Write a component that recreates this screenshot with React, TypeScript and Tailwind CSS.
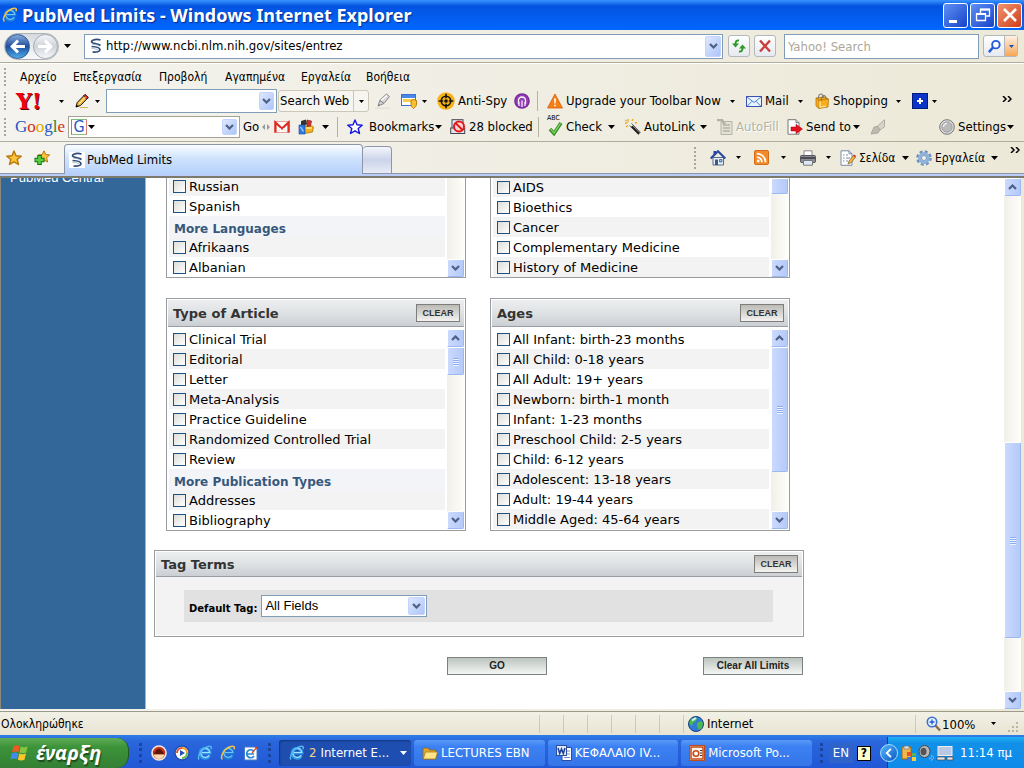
import { type ReactNode } from 'react';

type IconProps = { children: ReactNode; className?: string };

function Icon({ children, className = 'size-4' }: IconProps) {
  return (
    <svg viewBox="0 0 16 16" className={`shrink-0 ${className}`} aria-hidden="true">
      {children}
    </svg>
  );
}

function Caret({ className = '' }: { className?: string }) {
  return (
    <svg viewBox="0 0 7 4" className={`h-1 w-[7px] shrink-0 ${className}`} aria-hidden="true">
      <path d="M0 0h7L3.500 4z" fill="currentColor" />
    </svg>
  );
}

function SmallCaret({ className = '' }: { className?: string }) {
  return (
    <svg viewBox="0 0 5 3" className={`h-[3px] w-[5px] shrink-0 ${className}`} aria-hidden="true">
      <path d="M0 0h5L2.500 3z" fill="currentColor" />
    </svg>
  );
}

function Arrow({ up = false }: { up?: boolean }) {
  return (
    <svg viewBox="0 0 9 6" className={`h-1.5 w-[9px] ${up ? 'rotate-180' : ''}`} aria-hidden="true">
      <path d="M1 1l3.500 3.500L8 1" fill="none" stroke="#4d6185" strokeWidth="2.200" />
    </svg>
  );
}

function Grip({ className = '' }: { className?: string }) {
  return <span className={`w-0 shrink-0 border-l-2 border-dotted border-[#a9a797] ${className}`} />;
}

function Divider({ className = '' }: { className?: string }) {
  return <span className={`h-5 w-px shrink-0 bg-[#b5b29f] ${className}`} />;
}

function DropButton({ className = 'w-[15px]' }: { className?: string }) {
  return (
    <button
      aria-label="Open list"
      className={`flex shrink-0 items-center justify-center self-stretch rounded-[2px] border border-[#c3d3fd] bg-gradient-to-br from-[#dfe8ff] to-[#adc5f8] ${className}`}
    >
      <Arrow />
    </button>
  );
}

function Chevrons({ className = '' }: { className?: string }) {
  return (
    <svg viewBox="0 0 10 6" className={`h-1.5 w-2.5 shrink-0 ${className}`} aria-hidden="true">
      <path d="M1 0l3 3-3 3M6 0l3 3-3 3" fill="none" stroke="#000" strokeWidth="1.500" />
    </svg>
  );
}

/* ---------- icons ---------- */

function IeIcon({ className }: { className?: string }) {
  return (
    <Icon className={className}>
      <path d="M12.500 10.500A5 5 0 1 1 13 8H5" fill="none" stroke="#1d7fd6" strokeWidth="3" />
      <path d="M12.200 10.200A4.500 4.500 0 1 1 12.800 7.500H5" fill="none" stroke="#6fc6f8" strokeWidth="1.200" />
      <path d="M2.500 14.500C-.5 12 4 4 10 1.800c4-1.500 5 .2 4 2.400" fill="none" stroke="#f5c344" strokeWidth="1.500" />
    </Icon>
  );
}

function BlueIeIcon({ className }: { className?: string }) {
  return (
    <Icon className={className}>
      <path d="M12.500 10.500A5 5 0 1 1 13 8H5" fill="none" stroke="#2f9ae8" strokeWidth="3" />
      <path d="M12.200 10.200A4.500 4.500 0 1 1 12.800 7.500H5" fill="none" stroke="#a5e0ff" strokeWidth="1.200" />
      <path d="M2 14.500C0 12 4 4 10 1.800c4-1.500 5 .2 4 2.400" fill="none" stroke="#58b7f2" strokeWidth="1.400" />
    </Icon>
  );
}

function NcbiIcon() {
  return (
    <Icon>
      <rect width="16" height="16" fill="#fff" />
      <path d="M12.500 2C9 .8 4 1.500 3.500 3.800c0 2 6.500 1.500 9 3.700M3.500 8.500c3 .2 8.500 1 8.500 3.200 0 2-4 2.800-7.500 2.300" fill="none" stroke="#2f4d76" strokeWidth="1.700" />
      <path d="M4 6c2.500.8 5 .2 7 2M3.500 10.500c3 0 5 .5 7 1.500" fill="none" stroke="#9cb0c8" strokeWidth=".8" />
    </Icon>
  );
}

function PencilIcon() {
  return (
    <Icon>
      <path d="M2 14l1.200-4.500L11 1.500l3.200 3L6.500 12.500z" fill="#f5b83d" stroke="#111" />
      <path d="M9.500 3l3.200 3 1.600-1.500-3.300-3z" fill="#e33" stroke="#111" strokeWidth=".7" />
      <path d="M5 11l6.500-7" stroke="#fff3b0" />
      <path d="M2 14l.7-2.300 1.700 1.600z" fill="#000" />
      <path d="M6 14.500h8" stroke="#d6b25a" />
    </Icon>
  );
}

function MarkerIcon() {
  return (
    <Icon>
      <path d="M3 13l2-6 6.500-6 3 2.500-5.500 7z" fill="#d6d6d6" stroke="#8b8b8b" />
      <path d="M6 7.500l6-5" stroke="#fff" strokeWidth="1.500" />
      <path d="M5 7.500l3.800 2.800M3 13l2-1.500" stroke="#777" />
      <path d="M0 15.200h15" stroke="#dcdcd4" />
    </Icon>
  );
}

function PopupIcon() {
  return (
    <Icon>
      <rect x=".5" y="1.500" width="14" height="11" fill="#fff" stroke="#3b6fd0" />
      <path d="M1 2h13v3H1z" fill="#4b86ea" />
      <path d="M2 7.500h12" stroke="#f5cf4b" strokeWidth="3" />
      <path d="M10 7.500l2.500-1 3 1v3.500c0 2-1.500 3.500-3 4.500-1.500-1-2.500-2.500-2.500-4.500z" fill="#fbc02d" stroke="#c07c14" />
    </Icon>
  );
}

function TargetIcon() {
  return (
    <Icon className="size-[18px]">
      <circle cx="8" cy="8" r="7.800" fill="#f6b113" />
      <circle cx="8" cy="8" r="4.200" fill="none" stroke="#111" strokeWidth="1.400" />
      <circle cx="8" cy="8" r="1.600" fill="#111" />
      <path d="M8 1.500v4M8 10.500v4M1.500 8h4M10.500 8h4" stroke="#111" strokeWidth="1.400" />
    </Icon>
  );
}

function PodcastIcon() {
  return (
    <Icon>
      <circle cx="8" cy="8" r="7.800" fill="#7a2a9a" />
      <circle cx="8" cy="8" r="6.300" fill="#9440b4" />
      <path d="M4.500 11V7.500a3.500 3.500 0 0 1 7 0V11" fill="none" stroke="#fff" strokeWidth="1.300" />
      <path d="M5 9v4M11 9v4M8 7.500V14" stroke="#efdcf6" strokeWidth="1.400" />
    </Icon>
  );
}

function WarnIcon() {
  return (
    <Icon>
      <path d="M8 1l7.500 14H.5z" fill="#f57f17" stroke="#d85f0b" strokeWidth=".8" />
      <path d="M7 5.500h2l-.4 5H7.400zM7.200 11.700h1.600v1.600H7.200z" fill="#fff" />
    </Icon>
  );
}

function MailIcon() {
  return (
    <Icon>
      <rect x=".5" y="3.500" width="15" height="10" fill="#e8f3ff" stroke="#3c50b8" />
      <path d="M1 4l7 5.500L15 4M1 13.300l5-5M15 13.300l-5-5" fill="none" stroke="#4f7fd0" />
    </Icon>
  );
}

function BagIcon() {
  return (
    <Icon>
      <path d="M2 5l9-1 3.500 2-.5 8-9 1.500L2 13z" fill="#f7ae1e" stroke="#b87208" strokeWidth=".8" />
      <path d="M2 5l3 2 9.500-1M5 7v8.300" fill="none" stroke="#b87208" strokeWidth=".8" />
      <path d="M6 8.500v5.500l6-.8" fill="none" stroke="#ffdf8a" strokeWidth="1.500" />
      <path d="M4.500 5.500C4.500-.5 9-.5 9.500 5M7.500 8c0-7 4.500-7 4.500-2" fill="none" stroke="#777" strokeWidth="1.100" />
    </Icon>
  );
}

function PlusIcon() {
  return (
    <Icon>
      <rect x=".5" y=".5" width="15" height="15" fill="#0c34c8" stroke="#001c7c" />
      <path d="M8 5v6M5 8h6" stroke="#fff" strokeWidth="2" />
    </Icon>
  );
}

function GmailIcon() {
  return (
    <Icon>
      <rect x=".5" y="2.500" width="15" height="11" fill="#fff" stroke="#e8a09a" />
      <path d="M1.500 13.500V3.500L8 9.500l6.500-6v10" fill="none" stroke="#de2c22" strokeWidth="2.200" />
      <path d="M3.500 13L7 9M12.500 13L9 9" stroke="#ddd" />
    </Icon>
  );
}

function GadgetsIcon() {
  return (
    <Icon>
      <path d="M5 7h9l1.500 1-1 5-8 1.500L5 13z" fill="#f4b21f" stroke="#9a6a06" strokeWidth=".7" />
      <path d="M3 2l5-1.500 1 4.500-3 2-3-1z" fill="#333" />
      <path d="M9 1l4.500 1-1 5-3.500.5z" fill="#d0342c" stroke="#7a1510" strokeWidth=".6" />
      <path d="M1 6h6v9H1z" fill="#2f7be0" stroke="#184a9c" strokeWidth=".6" />
      <path d="M2.500 8l3 4.500" stroke="#a8d0ff" strokeWidth="1.300" />
      <path d="M8 9h6" stroke="#ffe691" strokeWidth="1.500" />
    </Icon>
  );
}

function StarIcon({ fill = '#fff', stroke = '#1414e0' }: { fill?: string; stroke?: string }) {
  return (
    <Icon>
      <path d="M8 1l2 4.800 5.200.4-4 3.300 1.300 5L8 11.800l-4.500 2.700 1.300-5-4-3.300L6 5.800z" fill={fill} stroke={stroke} strokeWidth="1.400" strokeLinejoin="round" />
    </Icon>
  );
}

function BlockedIcon() {
  return (
    <Icon>
      <rect x="2" y=".7" width="11" height="9" fill="#e6f0fa" stroke="#445" />
      <rect x=".7" y="9" width="14" height="5.500" fill="#e5e5e5" stroke="#445" />
      <circle cx="9" cy="7.500" r="5" fill="#ffd5d5" stroke="#e01b1b" strokeWidth="2" />
      <path d="M5.500 4l7 7" stroke="#e01b1b" strokeWidth="2" />
    </Icon>
  );
}

function SpellIcon() {
  return (
    <span className="relative flex h-[18px] w-4 shrink-0">
      <span className="absolute -top-1 left-0 text-[7px] leading-[9px]">ABC</span>
      <svg viewBox="0 0 16 18" className="h-[18px] w-4" aria-hidden="true">
        <path d="M3 11l4 4.500L14 5" fill="none" stroke="#2f8a21" strokeWidth="3.400" />
        <path d="M3.500 11L7 15l6.500-9.500" fill="none" stroke="#7fd060" strokeWidth="1.400" />
      </svg>
    </span>
  );
}

function WandIcon() {
  return (
    <Icon>
      <path d="M5.500 5.500l9 9" stroke="#222" strokeWidth="3.200" />
      <path d="M6 5l9 8.500" stroke="#aaa" strokeWidth="1" />
      <path d="M4.500 4.500l2.500 2.500" stroke="#eee" strokeWidth="2.400" />
      <path d="M3 0v3M0 4h2.500M8 0L7 2M1 8l2-1.500M0 1l1.500 1M10 4l2-.5" stroke="#e9a91b" strokeWidth="1.300" />
    </Icon>
  );
}

function FormIcon() {
  return (
    <Icon>
      <path d="M4 2.500h11v13H4z" fill="#e3e1d6" stroke="#b4b2a4" />
      <path d="M6 6h7M6 9h7M6 12h7" stroke="#b4b2a4" strokeWidth="1.400" />
      <path d="M0 1h5l3 5" fill="none" stroke="#b4b2a4" strokeWidth="2.500" />
    </Icon>
  );
}

function SendIcon() {
  return (
    <Icon>
      <path d="M1 .7h8l3 3v11.500H1z" fill="#fff" stroke="#777" />
      <path d="M9 .7v3h3" fill="#ddd" stroke="#777" />
      <path d="M4 8h5V5.300l6.500 4.700L9 14.700V12H4z" fill="#e3131f" stroke="#97000a" strokeWidth=".5" />
    </Icon>
  );
}

function BrushIcon() {
  return (
    <Icon>
      <path d="M1 15l3-7 5-1 1.500 3L8 14z" fill="#bdbbb0" stroke="#a3a196" strokeWidth=".8" />
      <path d="M7.500 7L14.500.8v7L10 11z" fill="#d7d5ca" stroke="#a3a196" strokeWidth=".8" />
    </Icon>
  );
}

function KnobIcon() {
  return (
    <Icon>
      <circle cx="8" cy="8" r="7.300" fill="#ddd" stroke="#777" />
      <circle cx="8" cy="8" r="5.200" fill="#b9b9b9" stroke="#999" strokeWidth=".8" />
      <path d="M4.500 8A3.500 3.500 0 0 1 8 4.500" fill="none" stroke="#eee" strokeWidth="1.400" />
    </Icon>
  );
}

function AddStarIcon() {
  return (
    <Icon>
      <path d="M10 .8l1.700 3.700 3.900.4-3 2.800 1 4.300L10 10l-3.500 2 .8-4.300-3-2.800 4-.4z" fill="#fcc33b" stroke="#b87708" />
      <path d="M5.500 5v10M.5 10h10" stroke="#137413" strokeWidth="4.600" />
      <path d="M5.500 6v8M1.500 10h8" stroke="#59cf47" strokeWidth="2.600" />
    </Icon>
  );
}

function HomeIcon() {
  return (
    <Icon>
      <path d="M3 7.500h10.500V15H3z" fill="#e8f0fb" stroke="#5a6b88" />
      <path d="M3.500 1h2.500v4H3.500z" fill="#2347b0" />
      <path d="M.7 8.500L8 1.200l7.300 7.300" fill="none" stroke="#26469e" strokeWidth="2" />
      <path d="M5 9.500h3V15H5z" fill="#385890" />
      <path d="M9.500 9.500h2.500v2.500H9.500z" fill="#8cc0ea" stroke="#335" strokeWidth=".6" />
    </Icon>
  );
}

function RssIcon() {
  return (
    <Icon className="size-[15px]">
      <rect x=".5" y=".5" width="15" height="15" rx="1.500" fill="#f28a2b" stroke="#d2640e" />
      <circle cx="4.500" cy="11.700" r="1.500" fill="#fff" />
      <path d="M3 7.500a5.500 5.500 0 0 1 5.500 5.500M3 3.800A9.200 9.200 0 0 1 12.300 13" fill="none" stroke="#fff" strokeWidth="1.800" />
    </Icon>
  );
}

function PrinterIcon() {
  return (
    <Icon>
      <path d="M4 .8h8V6H4z" fill="#fff" stroke="#888" />
      <rect x=".5" y="5.500" width="15" height="7" rx="1" fill="#8a8c92" stroke="#55575c" />
      <path d="M1 8h14" stroke="#4b4d52" strokeWidth="2" />
      <path d="M3.500 10.500h9v4.700h-9z" fill="#dce9fa" stroke="#777" />
    </Icon>
  );
}

function PageIcon() {
  return (
    <Icon>
      <path d="M1 .8h8l3 3v11.500H1z" fill="#fff" stroke="#7a8aa8" />
      <path d="M9 .8v3h3M3 5h1.500M3 8h1.500M3 11h1.500M6 5h2M6 8h4M6 11h2" fill="none" stroke="#7a8aa8" />
      <path d="M8 14l1-3 5-6 2 1.700-5 6z" fill="#f1b23e" stroke="#7d5b1f" strokeWidth=".7" />
      <path d="M13 5.500l1-1 2 1.500-1 1.200z" fill="#d33" />
    </Icon>
  );
}

function GearIcon() {
  return (
    <Icon>
      <circle cx="8" cy="8" r="6.500" fill="none" stroke="#6d8fb5" strokeWidth="2.500" strokeDasharray="2.900 2.200" />
      <circle cx="8" cy="8" r="4.300" fill="#fff" stroke="#8fb2dc" strokeWidth="3.200" />
      <circle cx="8" cy="8" r="2.500" fill="#f3f1e7" stroke="#6d8fb5" strokeWidth=".9" />
    </Icon>
  );
}

function GlobeIcon() {
  return (
    <Icon>
      <circle cx="8" cy="8" r="7.500" fill="#2f7ad6" stroke="#17427e" />
      <path d="M2 4.500C4 1.500 7 1 9 2l-1 3-3 2-1 3-2.500-2zM9 7l4-2 2 2-1 5-3 2-2-4z" fill="#4fb84a" />
      <path d="M4 4.500l4-2.500" stroke="#d9f3ff" strokeWidth="2" />
    </Icon>
  );
}

function WindowsFlag() {
  return (
    <svg viewBox="0 0 20 18" className="h-[18px] w-5 shrink-0" aria-hidden="true">
      <path d="M3.500 2C6 .8 8 1 9.700 2L8.400 8.200C6.500 7.200 4.500 7.200 2 8.200z" fill="#ee5a24" />
      <path d="M10.700 2.500c2 1 4.300 1 7-.2l-1.500 6.200c-2.500 1-4.500 1-6.800 0z" fill="#86c440" />
      <path d="M1.800 9.300c2.300-1 4.500-1 6.400 0l-1.300 6C5 14.300 3 14.300.4 15.300z" fill="#3f8cf0" />
      <path d="M9.200 9.600c2.200 1 4.400 1 6.800 0l-1.500 6.200c-2.300 1-4.500 1-6.600 0z" fill="#fbc62b" />
    </svg>
  );
}

/* ---------- browser chrome ---------- */

function TitleBar() {
  const button = 'flex size-[25px] items-center justify-center rounded-[3px] border border-white';
  return (
    <header className="flex h-[30px] shrink-0 items-center bg-gradient-to-b from-[#3a93ff] via-[#0453e0] via-20% to-[#0167ff] pr-0.5 pl-0.5">
      <IeIcon className="size-4" />
      <h1 className="ml-1 flex-1 font-['Noto_Sans','Open_Sans',sans-serif] text-[18px] leading-6 font-bold text-white [text-shadow:1px_1px_1px_#0a2a90]">
        PubMed Limits - Windows Internet Explorer
      </h1>
      <div className="flex gap-0.5">
        <button aria-label="Minimize" className={`${button} bg-gradient-to-br from-[#5f8ff5] to-[#1941c8]`}>
          <span className="mt-3 mr-1.5 h-[3px] w-2 bg-white" />
        </button>
        <button aria-label="Restore" className={`${button} bg-gradient-to-br from-[#5f8ff5] to-[#1941c8]`}>
          <Icon>
            <path d="M5.500 6V2.500h9V9H11M5.500 2.500h9M1.500 7h9v6.500h-9z" fill="none" stroke="#fff" strokeWidth="1.300" />
            <path d="M5 2.500h10M1 7h10" stroke="#fff" strokeWidth="2" />
          </Icon>
        </button>
        <button aria-label="Close" className={`${button} bg-gradient-to-br from-[#f0936f] to-[#cf3a12]`}>
          <Icon>
            <path d="M2 2l12 12M14 2L2 14" stroke="#fff" strokeWidth="2.600" />
          </Icon>
        </button>
      </div>
    </header>
  );
}

function AddressBar() {
  const small = 'flex size-[22px] shrink-0 items-center justify-center rounded-[3px] border border-[#b3b8bd] bg-gradient-to-b from-white to-[#e6e9f0]';
  return (
    <div className="flex h-[33px] shrink-0 items-center border-b border-[#b0ad9b] pr-1.5 pl-1 text-[13px]">
      <div className="flex h-[27px] w-[55px] shrink-0 items-center justify-between rounded-full border border-[#aeb2b8] bg-gradient-to-b from-[#d6dadf] to-[#f7f8f9]">
        <button aria-label="Back" className="flex size-[25px] items-center justify-center rounded-full border border-[#2f5a94] bg-gradient-to-b from-[#88a9da] via-[#1f4f9f] to-[#4faee8]">
          <Icon className="size-[17px]">
            <path d="M15 8H4M8.500 2.500L3 8l5.500 5.500" fill="none" stroke="#fff" strokeWidth="2.800" />
          </Icon>
        </button>
        <button aria-label="Forward" className="flex size-[25px] items-center justify-center rounded-full border border-[#a5acb5] bg-gradient-to-b from-[#f3f4f6] via-[#cfd4da] to-[#f5f8fa]">
          <Icon className="size-[17px]">
            <path d="M1 8h11M7.500 2.500L13 8l-5.500 5.500" fill="none" stroke="#fff" strokeWidth="2.800" />
          </Icon>
        </button>
      </div>
      <button aria-label="Recent pages" className="ml-[5px]">
        <Caret />
      </button>
      <div className="ml-[13px] flex h-[25px] flex-1 items-center border border-[#7f9db9] bg-white p-px pl-[3px]">
        <NcbiIcon />
        <input aria-label="Address" defaultValue="http://www.ncbi.nlm.nih.gov/sites/entrez" className="ml-0.5 min-w-0 flex-1 outline-none" />
        <DropButton className="w-4" />
      </div>
      <button aria-label="Refresh" className={`${small} ml-[5px]`}>
        <Icon>
          <path d="M8 2.500C5.500 2 4.500 3.500 4.500 6M8 13.500c2.500.5 3.500-1 3.500-3.500" fill="none" stroke="#2f9a27" strokeWidth="2" />
          <path d="M1 5.500h7L4.500 9.500zM8 10.500h7L11.500 6.500z" fill="#2f9a27" />
        </Icon>
      </button>
      <button aria-label="Stop" className={`${small} ml-1`}>
        <Icon>
          <path d="M3 2.500l10 11M13 2.500l-10 11" stroke="#c8403c" strokeWidth="2.400" />
        </Icon>
      </button>
      <input aria-label="Search" placeholder="Yahoo! Search" className="ml-2 h-[25px] w-[195px] border border-[#7f9db9] bg-white px-[3px] outline-none placeholder:text-[#aca899]" />
      <div className="ml-1 flex h-[22px] w-[35px] shrink-0 rounded-[3px] border border-[#b3b8bd] bg-gradient-to-b from-white to-[#e6e9f0]">
        <button aria-label="Go" className="flex flex-1 items-center justify-center border-r border-[#b3b8bd]">
          <Icon className="size-[15px]">
            <circle cx="9.500" cy="6" r="4" fill="#fff" stroke="#2459d8" strokeWidth="2" />
            <path d="M6.500 9L2 14" stroke="#2459d8" strokeWidth="2.600" />
          </Icon>
        </button>
        <button aria-label="Search options" className="flex w-3 items-center justify-center bg-gradient-to-b from-[#fdf0e2] to-[#f6a650] text-[#1a4fc0]">
          <SmallCaret />
        </button>
      </div>
    </div>
  );
}

const MENU = [
  { label: 'Αρχείο', width: 'w-[53px]' },
  { label: 'Επεξεργασία', width: 'w-[86px]' },
  { label: 'Προβολή', width: 'w-[66px]' },
  { label: 'Αγαπημένα', width: 'w-[76px]' },
  { label: 'Εργαλεία', width: 'w-[65px]' },
  { label: 'Βοήθεια', width: 'w-[60px]' },
];

function MenuBar() {
  return (
    <nav className="flex h-[26px] shrink-0 items-center border-t border-white pt-px pl-1">
      <Grip className="h-[18px]" />
      <div className="ml-3.5 flex">
        {MENU.map((item) => (
          <button key={item.label} className={`text-left whitespace-nowrap ${item.width}`}>
            {item.label}
          </button>
        ))}
      </div>
    </nav>
  );
}

type ToolProps = { icon?: ReactNode; label?: string; caret?: boolean; className: string };

function Tool({ icon, label, caret, className }: ToolProps) {
  return (
    <button aria-label={label ?? 'Tool'} className={`flex shrink-0 items-center gap-[3px] whitespace-nowrap ${className}`}>
      {icon}
      {label && <span>{label}</span>}
      {caret && <SmallCaret className="ml-auto" />}
    </button>
  );
}

function YahooBar() {
  return (
    <div className="flex h-6 shrink-0 items-center pr-3 pl-1 text-[13px]">
      <Grip className="h-[18px]" />
      <button className="ml-2.5 w-[33px] text-left font-['DejaVu_Serif',serif] text-[22px] leading-6 font-bold text-[#f00010] [text-shadow:1px_1px_0_#500]">
        Y!
      </button>
      <SmallCaret className="ml-2.5" />
      <Tool icon={<PencilIcon />} caret className="ml-2.5 w-[26px]" />
      <div className="ml-1.5 flex h-6 w-[171px] shrink-0 items-center border border-[#7f9db9] bg-white p-0.5">
        <input aria-label="Yahoo search" className="min-w-0 flex-1 outline-none" />
        <DropButton />
      </div>
      <div className="ml-px flex h-[22px] w-[91px] shrink-0 items-center rounded-[3px] border border-[#cbc8b8] bg-[#f6f5ef]">
        <button className="flex-1 pl-px text-left whitespace-nowrap">Search Web</button>
        <button aria-label="Search Web options" className="flex h-full w-[15px] items-center justify-center border-l border-[#cbc8b8]">
          <SmallCaret />
        </button>
      </div>
      <Tool icon={<MarkerIcon />} className="ml-1.5 w-[26px]" />
      <Tool icon={<PopupIcon />} caret className="w-[26px]" />
      <Tool icon={<TargetIcon />} label="Anti-Spy" className="ml-2.5 w-[77px]" />
      <Tool icon={<PodcastIcon />} className="w-4" />
      <Divider className="ml-[7px]" />
      <Tool icon={<WarnIcon />} label="Upgrade your Toolbar Now" caret className="ml-[9px] w-[188px]" />
      <Tool icon={<MailIcon />} label="Mail" caret className="ml-[11px] w-[57px]" />
      <Tool icon={<BagIcon />} label="Shopping" caret className="ml-[11px] w-[87px]" />
      <Tool icon={<PlusIcon />} caret className="ml-[11px] w-[25px]" />
      <Chevrons className="mb-1 ml-auto" />
    </div>
  );
}

function GoogleBar() {
  return (
    <div className="flex h-[29px] shrink-0 items-center border-b border-[#b0ad9b] pr-2.5 pb-px pl-1 text-[13px]">
      <Grip className="h-[18px]" />
      <a href="#google" className="ml-[9px] flex w-[53px] font-['Liberation_Serif',serif] text-[17px] leading-5">
        <span className="text-[#2a56c6]">G</span>
        <span className="text-[#d62d20]">o</span>
        <span className="text-[#e0a800]">o</span>
        <span className="text-[#2a56c6]">g</span>
        <span className="text-[#1d8a3a]">l</span>
        <span className="text-[#d62d20]">e</span>
      </a>
      <div className="flex h-[22px] w-[172px] shrink-0 items-center border border-[#a5a392] bg-white p-0.5">
        <span className="flex size-4 items-center justify-center border border-t-[#7ac07a] border-r-[#e07a7a] border-b-[#8cc07a] border-l-[#6a8ae0] text-[16px] leading-4 text-[#2a56c6]">G</span>
        <Caret className="ml-px" />
        <input aria-label="Google search" className="min-w-0 flex-1 outline-none" />
        <DropButton />
      </div>
      <button className="ml-[3px] w-[19px] text-left">Go</button>
      <svg viewBox="0 0 8 6" className="h-1.5 w-2 shrink-0" aria-hidden="true">
        <path d="M3 0v6L0 3zM5 0v6l3-3z" fill="#999" />
      </svg>
      <Tool icon={<GmailIcon />} className="ml-1 w-6" />
      <button aria-label="Gadgets" className="flex w-[31px] items-center justify-between">
        <GadgetsIcon />
        <Caret />
      </button>
      <Divider className="ml-2" />
      <button className="ml-[9px] flex w-[103px] items-center">
        <StarIcon />
        <span className="mr-auto ml-1.5">Bookmarks</span>
        <Caret className="mr-2" />
      </button>
      <Tool icon={<BlockedIcon />} label="28 blocked" className="w-[88px]" />
      <Divider />
      <button className="ml-2 flex w-[78px] items-center">
        <SpellIcon />
        <span className="mr-auto ml-[3px]">Check</span>
        <Caret className="mr-2.5" />
      </button>
      <button className="flex w-[92px] items-center">
        <WandIcon />
        <span className="mr-auto ml-[3px]">AutoLink</span>
        <Caret className="mr-2.5" />
      </button>
      <button disabled className="flex w-[70px] items-center gap-[3px] text-[#b4b2a4] [text-shadow:1px_1px_0_#fff]">
        <FormIcon />
        AutoFill
      </button>
      <button className="flex w-[83px] items-center">
        <SendIcon />
        <span className="mr-auto ml-[3px] whitespace-nowrap">Send to</span>
        <Caret className="mr-2.5" />
      </button>
      <Tool icon={<BrushIcon />} className="w-5" />
      <button className="ml-auto flex items-center gap-[3px]">
        <KnobIcon />
        Settings
        <Caret className="-ml-0.5" />
      </button>
    </div>
  );
}

function TabBar() {
  return (
    <div className="flex h-9 shrink-0 flex-col border-b-2 border-b-[#7c7a6c]">
      <div className="flex h-8 items-end">
        <div className="flex w-16 shrink-0 items-center self-stretch border-b border-[#8e95a8] pl-1.5">
          <button aria-label="Favorites">
            <StarIcon fill="#fcc33b" stroke="#b87708" />
          </button>
          <button aria-label="Add to favorites" className="ml-3">
            <AddStarIcon />
          </button>
        </div>
        <button className="flex h-[30px] w-[299px] items-center gap-0.5 rounded-t-[4px] border border-b-0 border-[#8e95a8] bg-gradient-to-b from-[#fbfdff] via-[#cfe3fc] via-45% to-[#b5d0fb] pl-1 text-[13px]">
          <NcbiIcon />
          PubMed Limits
        </button>
        <button aria-label="New tab" className="h-7 w-[29px] rounded-t-[4px] border border-l-0 border-[#8e95a8] bg-gradient-to-b from-[#f4f6fb] via-[#ccd4ea] via-50% to-[#e8ebf7]" />
        <div className="flex flex-1 items-center justify-end self-stretch border-b border-[#8e95a8] pr-1">
          <Grip className="h-[22px]" />
          <Tool icon={<HomeIcon />} caret className="ml-3.5 w-[31px]" />
          <Tool icon={<RssIcon />} caret className="ml-[13px] w-8" />
          <Tool icon={<PrinterIcon />} caret className="ml-3.5 w-[31px]" />
          <button className="ml-[9px] flex w-[69px] items-center gap-[3px]">
            <PageIcon />
            Σελίδα
            <Caret className="ml-auto" />
          </button>
          <button className="ml-[7px] flex w-[82px] items-center gap-[3px]">
            <GearIcon />
            Εργαλεία
            <Caret className="ml-auto" />
          </button>
          <Chevrons className="mb-4 ml-3" />
        </div>
      </div>
      <div className="flex-1 bg-[#b9cdf8]" />
    </div>
  );
}

/* ---------- page ---------- */

type ScrollbarProps = { before?: string; thumb: string; up?: boolean; grip?: boolean };

function Scrollbar({ before = 'h-0', thumb, up = true, grip = true }: ScrollbarProps) {
  const face = 'shrink-0 rounded-[2px] border border-[#9cb8f0] border-t-white border-l-white bg-gradient-to-r from-[#cbd9fe] to-[#b4caf9]';
  return (
    <div className="flex w-[17px] shrink-0 flex-col bg-gradient-to-r from-[#f1efe8] to-[#fefefa]">
      {up && (
        <button aria-label="Scroll up" className={`flex h-[18px] items-center justify-center ${face}`}>
          <Arrow up />
        </button>
      )}
      <div className={before} />
      <div className={`flex flex-col items-center justify-center gap-px ${face} ${thumb}`}>
        {grip && [0, 1, 2, 3].map((i) => <span key={i} className="h-px w-1.5 bg-[#8bacf0] shadow-[0_1px_0_#eef3ff]" />)}
      </div>
      <div className="flex-1" />
      <button aria-label="Scroll down" className={`flex h-[18px] items-center justify-center ${face}`}>
        <Arrow />
      </button>
    </div>
  );
}

function CheckRow({ label, shaded }: { label: string; shaded: boolean }) {
  return (
    <label className={`flex h-5 shrink-0 items-center pl-1 whitespace-nowrap ${shaded ? 'bg-[#f3f3f3]' : 'bg-white'}`}>
      <input type="checkbox" className="mr-[3px] size-[13px] shrink-0 appearance-none border border-[#1c5180] bg-gradient-to-br from-[#dcdcd7] to-white checked:bg-[#21a121]" />
      <span className="pt-0.5 leading-4">{label}</span>
    </label>
  );
}

function GroupTitle({ children }: { children: ReactNode }) {
  return <h3 className="flex h-[21px] shrink-0 items-center bg-[#f2f4f7] pt-1 pl-[5px] text-[12px] font-bold text-[#36587c]">{children}</h3>;
}

function ClearButton() {
  return (
    <button className="h-[18px] w-11 border border-[#7d7d7b] bg-gradient-to-b from-[#bcbab5] to-[#f4f3f0] font-['Liberation_Sans',sans-serif] text-[9px] leading-4 font-bold text-[#333]">
      CLEAR
    </button>
  );
}

function PanelHeader({ title, className }: { title: string; className: string }) {
  return (
    <div className={`flex items-center justify-between border-b border-[#989ea4] bg-gradient-to-b from-[#eceeef] via-[#dfe2e4] to-[#cbcfd3] pr-1 pl-[5px] ${className}`}>
      <h2 className="pt-0.5 font-bold text-[#333]">{title}</h2>
      <ClearButton />
    </div>
  );
}

const LANGUAGES = ['Russian', 'Spanish'];
const MORE_LANGUAGES = ['Afrikaans', 'Albanian'];
const SUBSETS = ['AIDS', 'Bioethics', 'Cancer', 'Complementary Medicine', 'History of Medicine'];
const ARTICLE_TYPES = [
  'Clinical Trial',
  'Editorial',
  'Letter',
  'Meta-Analysis',
  'Practice Guideline',
  'Randomized Controlled Trial',
  'Review',
];
const MORE_TYPES = ['Addresses', 'Bibliography'];
const AGES = [
  'All Infant: birth-23 months',
  'All Child: 0-18 years',
  'All Adult: 19+ years',
  'Newborn: birth-1 month',
  'Infant: 1-23 months',
  'Preschool Child: 2-5 years',
  'Child: 6-12 years',
  'Adolescent: 13-18 years',
  'Adult: 19-44 years',
  'Middle Aged: 45-64 years',
];

function LimitsForm() {
  const panel = 'w-[300px] border border-[#999ca0] bg-white p-px';
  const rows = 'mr-0.5 flex flex-1 flex-col overflow-hidden';
  return (
    <form className="w-[650px] font-['DejaVu_Sans',sans-serif] text-[13px] leading-4" onSubmit={(e) => e.preventDefault()}>
      <div className="flex gap-6 px-3">
        <section className={`${panel} flex h-[100px] border-t-0 py-0 pl-0.5`}>
          <div className={`${rows} justify-end`}>
            {LANGUAGES.map((label, i) => (
              <CheckRow key={label} label={label} shaded={i % 2 === 0} />
            ))}
            <GroupTitle>More Languages</GroupTitle>
            {MORE_LANGUAGES.map((label, i) => (
              <CheckRow key={label} label={label} shaded={i % 2 === 0} />
            ))}
          </div>
          <Scrollbar up={false} thumb="hidden" grip={false} />
        </section>
        <section className={`${panel} flex h-[100px] border-t-0 py-0 pl-0.5`}>
          <div className={`${rows} justify-end`}>
            {SUBSETS.map((label, i) => (
              <CheckRow key={label} label={label} shaded={i % 2 === 0} />
            ))}
          </div>
          <Scrollbar up={false} thumb="h-4" grip={false} />
        </section>
      </div>

      <div className="mt-5 flex gap-6 px-3">
        <section className={panel}>
          <PanelHeader title="Type of Article" className="h-[27px]" />
          <div className="mt-0.5 ml-px flex h-[200px]">
            <div className={rows}>
              {ARTICLE_TYPES.map((label, i) => (
                <CheckRow key={label} label={label} shaded={i % 2 === 1} />
              ))}
              <GroupTitle>More Publication Types</GroupTitle>
              {MORE_TYPES.map((label, i) => (
                <CheckRow key={label} label={label} shaded={i % 2 === 0} />
              ))}
            </div>
            <Scrollbar thumb="h-7" />
          </div>
        </section>
        <section className={panel}>
          <PanelHeader title="Ages" className="h-[27px]" />
          <div className="mt-0.5 ml-px flex h-[200px]">
            <div className={rows}>
              {AGES.map((label, i) => (
                <CheckRow key={label} label={label} shaded={i % 2 === 1} />
              ))}
            </div>
            <Scrollbar thumb="h-[125px]" />
          </div>
        </section>
      </div>

      <section className="mt-[19px] border border-[#999ca0] bg-white p-px">
        <PanelHeader title="Tag Terms" className="h-[25px]" />
        <div className="bg-[#f3f3f3] py-[13px] pr-[29px] pl-7">
          <div className="flex h-8 items-center bg-[#e1e1e1] pl-[5px]">
            <label htmlFor="tag" className="pt-1.5 text-[10px] font-bold whitespace-nowrap">
              Default Tag:
            </label>
            <div className="ml-1 flex h-[22px] w-[166px] items-center border border-[#7f9db9] bg-white p-px">
              <select id="tag" className="h-full min-w-0 flex-1 appearance-none pl-0.5 font-['Liberation_Sans',sans-serif] text-[13px] outline-none">
                <option>All Fields</option>
              </select>
              <DropButton className="w-[17px]" />
            </div>
          </div>
        </div>
      </section>

      <div className="mt-5 flex justify-end gap-39 pr-px font-['Liberation_Sans',sans-serif] font-bold text-[#222]">
        <button className="h-[18px] w-[100px] border border-[#7d817d] bg-gradient-to-b from-[#bcc4bf] to-[#f4f6f3] text-[10px] leading-4">GO</button>
        <button className="h-[18px] w-[100px] border border-[#7d817d] bg-gradient-to-b from-[#bcc4bf] to-[#f4f6f3] text-[10px] leading-4">
          Clear All Limits
        </button>
      </div>
    </form>
  );
}

function Page() {
  return (
    <main className="flex min-h-0 flex-1 overflow-hidden border-r-[3px] border-l border-[#ece9d8] border-l-[#8a8878] bg-white">
      <aside className="w-36 shrink-0 overflow-hidden bg-[#336699] pl-[9px]">
        <a href="#central" className="-mt-2 block font-['Liberation_Sans',sans-serif] text-[13px] leading-4 text-white">
          PubMed Central
        </a>
      </aside>
      <div className="flex-1 border-l border-[#9fb6d6] pl-2">
        <LimitsForm />
      </div>
      <Scrollbar before="h-[246px]" thumb="h-[196px]" />
    </main>
  );
}

function StatusBar() {
  return (
    <footer className="mt-0.5 flex h-6 shrink-0 items-center border-t border-[#9c9a8a] bg-gradient-to-b from-[#f2f1e6] to-[#e7e4d3] pr-1 pl-px">
      <span className="flex-1">Ολοκληρώθηκε</span>
      {[0, 1, 2, 3, 4, 5].map((i) => (
        <span key={i} className="h-[18px] w-6 border-l border-[#cdcab8]" />
      ))}
      <div className="flex h-[18px] w-[232px] items-center gap-[3px] border-l border-[#cdcab8] pl-1 text-[13px]">
        <GlobeIcon />
        Internet
      </div>
      <div className="flex h-[18px] w-[105px] items-center border-l border-[#cdcab8] pl-2.5 text-[13px]">
        <Icon>
          <path d="M9 9l5 5.500" stroke="#8a6a4a" strokeWidth="2.400" />
          <circle cx="6" cy="6" r="4.700" fill="#eaf4ff" stroke="#3b6fd0" strokeWidth="1.600" />
          <path d="M6 3.500v5M3.500 6h5" stroke="#2459d8" strokeWidth="1.400" />
        </Icon>
        <span className="pt-0.5">100%</span>
        <SmallCaret className="ml-4" />
        <svg viewBox="0 0 12 12" className="mt-2 ml-auto size-3 shrink-0" aria-hidden="true">
          <path d="M8 0h2v2H8zM4 4h2v2H4zM8 4h2v2H8zM0 8h2v2H0zM4 8h2v2H4zM8 8h2v2H8z" fill="#b8b5a2" />
        </svg>
      </div>
    </footer>
  );
}

const TASKS = [
  {
    label: 'LECTURES EBN',
    icon: (
      <Icon>
        <path d="M1 3h5l1.500 2H14v9H1z" fill="#e0a82e" stroke="#8c6510" strokeWidth=".8" />
        <path d="M3.500 7H15.500L13.500 14H1.200z" fill="#ffe48a" stroke="#a97b18" strokeWidth=".8" />
      </Icon>
    ),
  },
  {
    label: 'ΚΕΦΑΛΑΙΟ IV...',
    icon: (
      <Icon>
        <path d="M6 2.500h9.500v13H6z" fill="#fff" stroke="#2b4f9c" />
        <path d="M11 6h3M11 9h3M8 12.500h6" stroke="#6f8fd0" />
        <rect x=".5" y=".5" width="10" height="10" fill="#dfe9fb" stroke="#2b4f9c" />
        <path d="M2 3l1.700 5.500L5.500 4l1.800 4.500L9 3" fill="none" stroke="#1c3f94" strokeWidth="1.500" />
      </Icon>
    ),
  },
  {
    label: 'Microsoft Po...',
    icon: (
      <Icon>
        <rect x=".5" y=".5" width="15" height="15" fill="#fff3ea" stroke="#c24a16" />
        <rect x="2" y="2" width="12" height="12" fill="none" stroke="#c24a16" strokeWidth="1.500" />
        <circle cx="7" cy="8.500" r="2.800" fill="#fff" stroke="#c24a16" strokeWidth="1.600" />
        <path d="M11 5.500h2M11 8h2M11 10.500h2" stroke="#333" />
      </Icon>
    ),
  },
];

function TaskGrip({ className = '' }: { className?: string }) {
  return <span className={`h-5 w-0 shrink-0 border-l-[3px] border-dotted border-[#1b449f] ${className}`} />;
}

function Taskbar() {
  return (
    <div className="flex h-[33px] shrink-0 items-end bg-gradient-to-b from-[#2f7de8] via-[#2a66dc] via-20% to-[#2158d6] text-[13px] text-white">
      <button className="flex h-[30px] w-[129px] shrink-0 items-center gap-1.5 rounded-r-xl border-r border-[#1f5a1f] bg-gradient-to-b from-[#5eac56] via-[#3c9339] via-30% to-[#347f34] pl-2.5 font-['Noto_Sans',sans-serif] text-[20px] leading-6 font-bold italic [text-shadow:1px_2px_1px_#1d4d1d]">
        <WindowsFlag />
        έναρξη
      </button>
      <div className="flex h-[30px] min-w-0 flex-1 items-center pl-2.5">
        <TaskGrip />
        <div className="ml-[9px] flex gap-[7px]">
          <button aria-label="Media player">
            <Icon>
              <circle cx="8" cy="8" r="7" fill="#c9301d" stroke="#f3e9dc" strokeWidth="1.600" />
              <path d="M3 9c1-3 3-5 5-5s4 2 5 5z" fill="#5a160b" />
              <path d="M2.500 9.500h11c-1 3-3 4.500-5.500 4.500s-4.500-1.500-5.500-4.500z" fill="#f8d9b0" />
            </Icon>
          </button>
          <button aria-label="Windows Media">
            <Icon>
              <circle cx="8" cy="8" r="7" fill="#fff" stroke="#244db0" strokeWidth="1.500" />
              <path d="M8 2a6 6 0 0 1 6 6h-2a4 4 0 0 0-4-4z" fill="#f39a1e" />
              <path d="M2 8a6 6 0 0 1 6-6v2a4 4 0 0 0-4 4z" fill="#e4512a" />
              <path d="M8 14a6 6 0 0 0 6-6h-2a4 4 0 0 1-4 4z" fill="#5bb648" />
              <path d="M6 5l5 3-5 3z" fill="#224fb8" />
            </Icon>
          </button>
          <button aria-label="Browser">
            <BlueIeIcon />
          </button>
          <button aria-label="Internet Explorer">
            <IeIcon />
          </button>
          <button aria-label="Outlook Express">
            <Icon>
              <path d="M1.500 2h10l2.500 2v11H1.500z" fill="#fff" stroke="#4a79c8" />
              <path d="M11 6.500A4 4 0 1 0 11 11M4.500 9H11" fill="none" stroke="#2a86d8" strokeWidth="1.700" />
              <path d="M9 8l5-6M12.500 3l2.500 1" stroke="#d64a1c" strokeWidth="1.200" />
            </Icon>
          </button>
        </div>
        <TaskGrip className="ml-[9px]" />
        <div className="ml-2 flex min-w-0 flex-1 gap-[3px]">
          <button className="flex h-[26px] max-w-[132px] min-w-0 flex-1 items-center gap-1 rounded-[3px] bg-[#1e4fb0] pr-1 pl-2.5 whitespace-nowrap shadow-[inset_1px_1px_2px_#12357d]">
            <BlueIeIcon />
            <span className="text-[#ffd087]">2</span>
            Internet E...
            <Caret className="ml-auto" />
          </button>
          {TASKS.map((task) => (
            <button
              key={task.label}
              className="flex h-[26px] max-w-[131px] min-w-0 flex-1 items-center gap-[3px] rounded-[3px] bg-gradient-to-b from-[#5a9af8] via-[#3c81f3] via-25% to-[#3575e8] pl-2 whitespace-nowrap"
            >
              {task.icon}
              {task.label}
            </button>
          ))}
        </div>
        <TaskGrip className="ml-2" />
        <span className="ml-1.5 bg-[#2f63c8] px-1 leading-5">EN</span>
        <button aria-label="Help" className="mr-4 ml-1 flex h-[15px] w-3.5 shrink-0 items-center justify-center border border-black bg-[#ffffc8] text-[12px] leading-3 font-bold text-black">
          ?
        </button>
      </div>
      <div className="flex h-[31px] w-[137px] shrink-0 items-center border-l border-[#0a3f96] bg-gradient-to-b from-[#1fb0f4] via-[#1290e8] via-20% to-[#0f8aea]">
        <button aria-label="Show hidden icons" className="-ml-2 flex size-[18px] shrink-0 items-center justify-center rounded-full border border-[#a8dcff] bg-gradient-to-br from-[#54b6fa] to-[#0a58c8]">
          <Icon className="size-3">
            <path d="M10.500 2.500L5 8l5.500 5.500" fill="none" stroke="#fff" strokeWidth="2.600" />
          </Icon>
        </button>
        <div className="ml-0.5 flex gap-0.5">
          <Icon>
            <path d="M2 2h9v12H2z" fill="#f0b84c" stroke="#9a6a1a" />
            <path d="M4 1h5v3H4z" fill="#ddd" stroke="#777" strokeWidth=".7" />
            <path d="M7 7h4v4H7z" fill="#e4512a" />
            <path d="M12 8h4v3h-4z" fill="#5bb648" />
            <path d="M7 12h4v4H7z" fill="#3a78e0" />
            <path d="M12 12h4v4h-4z" fill="#fbd13b" />
          </Icon>
          <Icon>
            <ellipse cx="6.500" cy="6.500" rx="5.500" ry="6" fill="#b9b9b9" stroke="#444" />
            <ellipse cx="5.500" cy="6.500" rx="3" ry="3.800" fill="#555" />
            <path d="M11 14c2-.5 3-2 3-4M13 15.500c2-1 2.700-2.500 2.700-4" fill="none" stroke="#8fc0ff" />
          </Icon>
          <Icon className="h-4 w-[18px]">
            <rect x="1" y="1.500" width="14" height="9" fill="#b9c8e4" stroke="#eee" />
            <path d="M0 12h8v3H0zM10 12h6v3h-6z" fill="#e6e6e6" stroke="#444" strokeWidth=".7" />
          </Icon>
        </div>
        <time className="ml-1.5 whitespace-nowrap">11:14 πμ</time>
      </div>
    </div>
  );
}

export default function App() {
  return (
    <div className="flex h-screen flex-col overflow-hidden bg-gradient-to-r from-[#f4f3ee] to-[#ece9d8] font-['DejaVu_Sans_Condensed','Noto_Sans',sans-serif] text-[12px] leading-4 text-black">
      <TitleBar />
      <AddressBar />
      <MenuBar />
      <YahooBar />
      <GoogleBar />
      <TabBar />
      <Page />
      <StatusBar />
      <Taskbar />
    </div>
  );
}
